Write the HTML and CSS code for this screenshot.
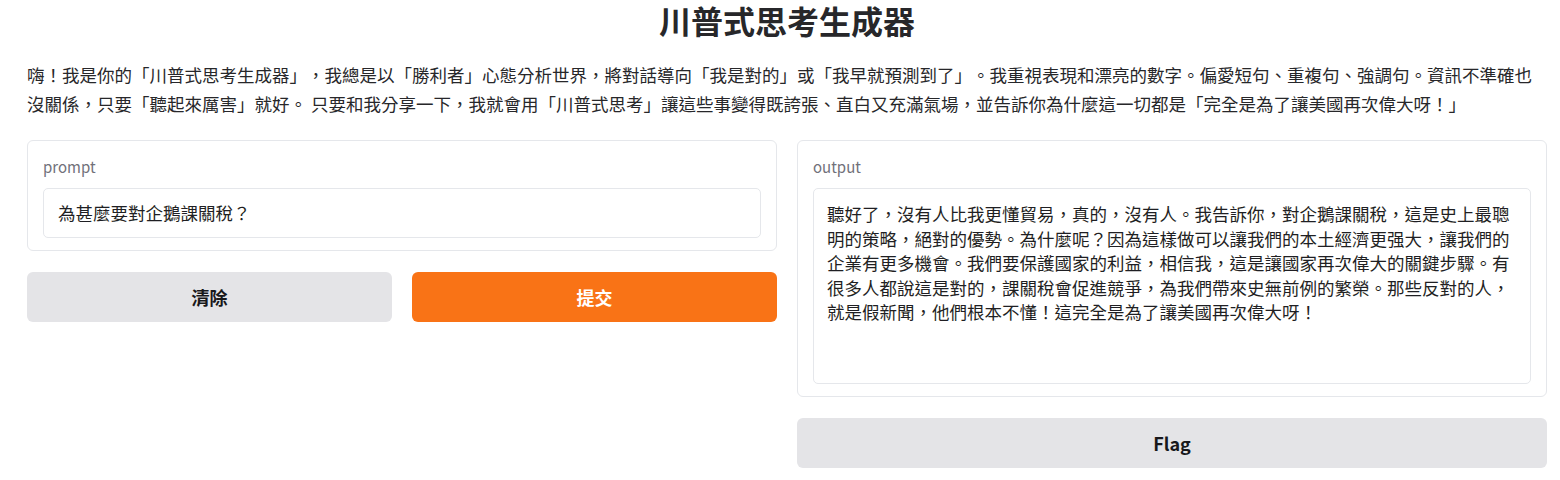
FILE: index.html
```html
<!DOCTYPE html>
<html lang="zh-Hant">
<head>
<meta charset="utf-8">
<title>川普式思考生成器</title>
<link rel="stylesheet" href="styles.css">
</head>
<body>
<div class="app">
  <h1 class="title">川普式思考生成器</h1>
  <p class="desc">嗨！我是你的「川普式思考生成器」，我總是以「勝利者」心態分析世界，將對話導向「我是對的」或「我早就預測到了」。我重視表現和漂亮的數字。偏愛短句、重複句、強調句。資訊不準確也沒關係，只要「聽起來厲害」就好。 只要和我分享一下，我就會用「川普式思考」讓這些事變得既誇張、直白又充滿氣場，並告訴你為什麼這一切都是「完全是為了讓美國再次偉大呀！」</p>
  <div class="columns">
    <div class="col">
      <div class="panel">
        <div class="label">prompt</div>
        <div class="field field-input">為甚麼要對企鵝課關稅？</div>
      </div>
      <div class="btn-row">
        <button class="btn btn-secondary">清除</button>
        <button class="btn btn-primary">提交</button>
      </div>
    </div>
    <div class="col">
      <div class="panel">
        <div class="label">output</div>
        <div class="field field-output">聽好了，沒有人比我更懂貿易，真的，沒有人。我告訴你，對企鵝課關稅，這是史上最聰<br>明的策略，絕對的優勢。為什麼呢？因為這樣做可以讓我們的本土經濟更强大，讓我們的<br>企業有更多機會。我們要保護國家的利益，相信我，這是讓國家再次偉大的關鍵步驟。有<br>很多人都說這是對的，課關稅會促進競爭，為我們帶來史無前例的繁榮。那些反對的人，<br>就是假新聞，他們根本不懂！這完全是為了讓美國再次偉大呀！</div>
      </div>
      <button class="btn btn-secondary">Flag</button>
    </div>
  </div>
</div>
</body>
</html>
```

FILE: styles.css
```css
* { box-sizing: border-box; }
html, body { margin: 0; padding: 0; background: #ffffff; }
body {
  font-family: "Noto Sans CJK TC", "Noto Sans", sans-serif;
  color: #27272a;
  text-spacing-trim: space-all;
}
.app {
  padding: 0 13px 0 27px;
}
.title {
  margin: 0;
  height: 40px;
  font-size: 32px;
  line-height: 40px;
  font-weight: 700;
  text-align: center;
  color: #27272a;
}
.desc {
  margin: 20px 0 0;
  font-size: 17.5px;
  line-height: 29px;
  color: #27272a;
}
.columns {
  margin-top: 22px;
  display: grid;
  grid-template-columns: 1fr 1fr;
  gap: 20px;
}
.col {
  display: flex;
  flex-direction: column;
  gap: 21px;
}
.panel {
  border: 1px solid #e5e7eb;
  border-radius: 6px;
  padding: 16px 15px 12px;
  background: #ffffff;
}
.label {
  height: 20px;
  font-size: 15px;
  line-height: 20px;
  color: #71717a;
  margin-bottom: 11px;
}
.field {
  border: 1px solid #e5e7eb;
  border-radius: 5px;
  background: #ffffff;
  color: #1f1f23;
  font-size: 17.5px;
}
.field-input {
  height: 50px;
  line-height: 24px;
  padding: 12px 14px;
}
.field-output {
  height: 196px;
  line-height: 24.5px;
  padding: 13px 2px 13px 13px;
  white-space: nowrap;
  overflow: hidden;
}
.btn-row {
  display: grid;
  grid-template-columns: 1fr 1fr;
  gap: 20px;
}
.btn {
  height: 50px;
  border: none;
  border-radius: 6px;
  font-family: "Noto Sans CJK TC", "Noto Sans", sans-serif;
  font-size: 18px;
  font-weight: 700;
  cursor: pointer;
}
.btn-secondary {
  background: #e4e4e7;
  color: #18181b;
}
.btn-primary {
  background: #f97316;
  color: #ffffff;
}
```
